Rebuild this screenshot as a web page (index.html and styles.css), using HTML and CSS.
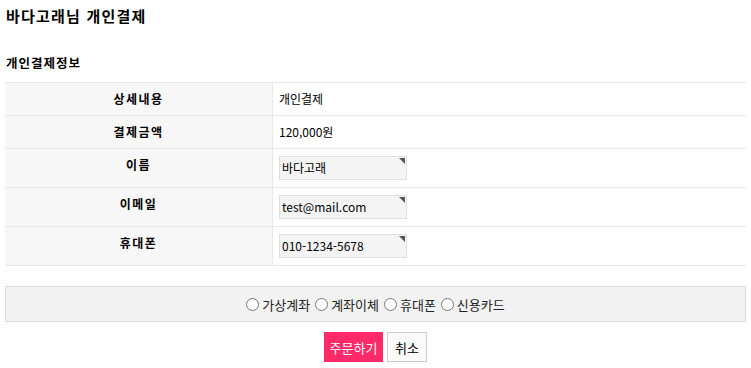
FILE: index.html
```html
<!DOCTYPE html>
<html lang="ko">

<head>
    <meta charset="UTF-8">
    <title>개인결제</title>
    <link rel="stylesheet" href="styles.css">
</head>

<body>

    <div class="wrap">
        <h1 class="page-title">바다고래님 개인결제</h1>

        <h2 class="sec-title">개인결제정보</h2>

        <table class="pay-table">
            <tr class="row-s">
                <th>상세내용</th>
                <td>개인결제</td>
            </tr>
            <tr class="row-s">
                <th>결제금액</th>
                <td>120,000원</td>
            </tr>
            <tr>
                <th>이름</th>
                <td><span class="frm-input">바다고래</span></td>
            </tr>
            <tr>
                <th>이메일</th>
                <td><span class="frm-input">test@mail.com</span></td>
            </tr>
            <tr>
                <th>휴대폰</th>
                <td><span class="frm-input">010-1234-5678</span></td>
            </tr>
        </table>

        <!-- 결제수단 -->
        <div class="pay-method">
            <label><span class="radio"></span>가상계좌</label>
            <label><span class="radio"></span>계좌이체</label>
            <label><span class="radio"></span>휴대폰</label>
            <label><span class="radio"></span>신용카드</label>
        </div>

        <div class="btn-area">
            <button class="btn-submit">주문하기</button>
            <button class="btn-cancel">취소</button>
        </div>
    </div>

</body>

</html>
```

FILE: styles.css
```css
body {
    margin: 0;
    background-color: white;
    color: #000;
    font-family: "Noto Sans CJK KR", "Noto Sans", sans-serif;
    font-size: 12px;
}

.wrap {
    padding: 0 5px;
}

.page-title {
    margin: 0;
    padding: 6px 0 0 1px;
    height: 20px;
    line-height: 20px;
    font-size: 15px;
    font-weight: bold;
    letter-spacing: 1.2px;
}

.sec-title {
    margin: 0;
    padding: 30px 0 0 1px;
    height: 26px;
    line-height: 14px;
    font-size: 12.5px;
    font-weight: bold;
    letter-spacing: 1px;
}

.pay-table {
    width: 100%;
    border-collapse: collapse;
    border-top: 1px solid #e8e8e8;
}

.pay-table th,
.pay-table td {
    border-bottom: 1px solid #e8e8e8;
    height: 38px;
    padding: 0;
    line-height: 16px;
}

.pay-table .row-s th,
.pay-table .row-s td {
    height: 32px;
}

.pay-table th {
    width: 267px;
    background-color: #f7f7f7;
    border-right: 1px solid #e8e8e8;
    font-weight: bold;
    letter-spacing: 1.5px;
    text-align: center;
    vertical-align: top;
    padding-top: 8px;
    height: 30px;
}

.pay-table .row-s th {
    height: 24px;
}

.pay-table td {
    padding-left: 6px;
    vertical-align: middle;
}

.frm-input {
    position: relative;
    display: block;
    box-sizing: border-box;
    width: 128px;
    height: 24px;
    line-height: 22px;
    padding-left: 2px;
    background-color: #f4f4f4;
    border: 1px solid #e0e0e0;
}

/* 필수 표시 */
.frm-input::after {
    content: "";
    position: absolute;
    top: 1px;
    right: 1px;
    border-top: 6px solid #55554a;
    border-left: 6px solid transparent;
}

.pay-method {
    margin-top: 20px;
    height: 34px;
    border: 1px solid #dcdcdc;
    background-color: #f2f2f2;
    display: flex;
    justify-content: center;
    align-items: center;
    gap: 5px;
    font-size: 13px;
    color: #222;
}

.pay-method label {
    display: flex;
    align-items: center;
    gap: 3px;
}

.radio {
    width: 11px;
    height: 11px;
    border: 1px solid #777;
    border-radius: 50%;
    background-color: white;
}

.btn-area {
    margin-top: 10px;
    display: flex;
    justify-content: center;
    gap: 4px;
}

.btn-area button {
    box-sizing: border-box;
    height: 30px;
    padding: 0;
    font-family: inherit;
    font-size: 13px;
    border: 1px solid #ccc;
}

.btn-submit {
    width: 59px;
    background-color: #ff2a67;
    border-color: #ff2a67 !important;
    color: white;
}

.btn-cancel {
    width: 40px;
    background-color: #fafafa;
    color: #000;
}
```
